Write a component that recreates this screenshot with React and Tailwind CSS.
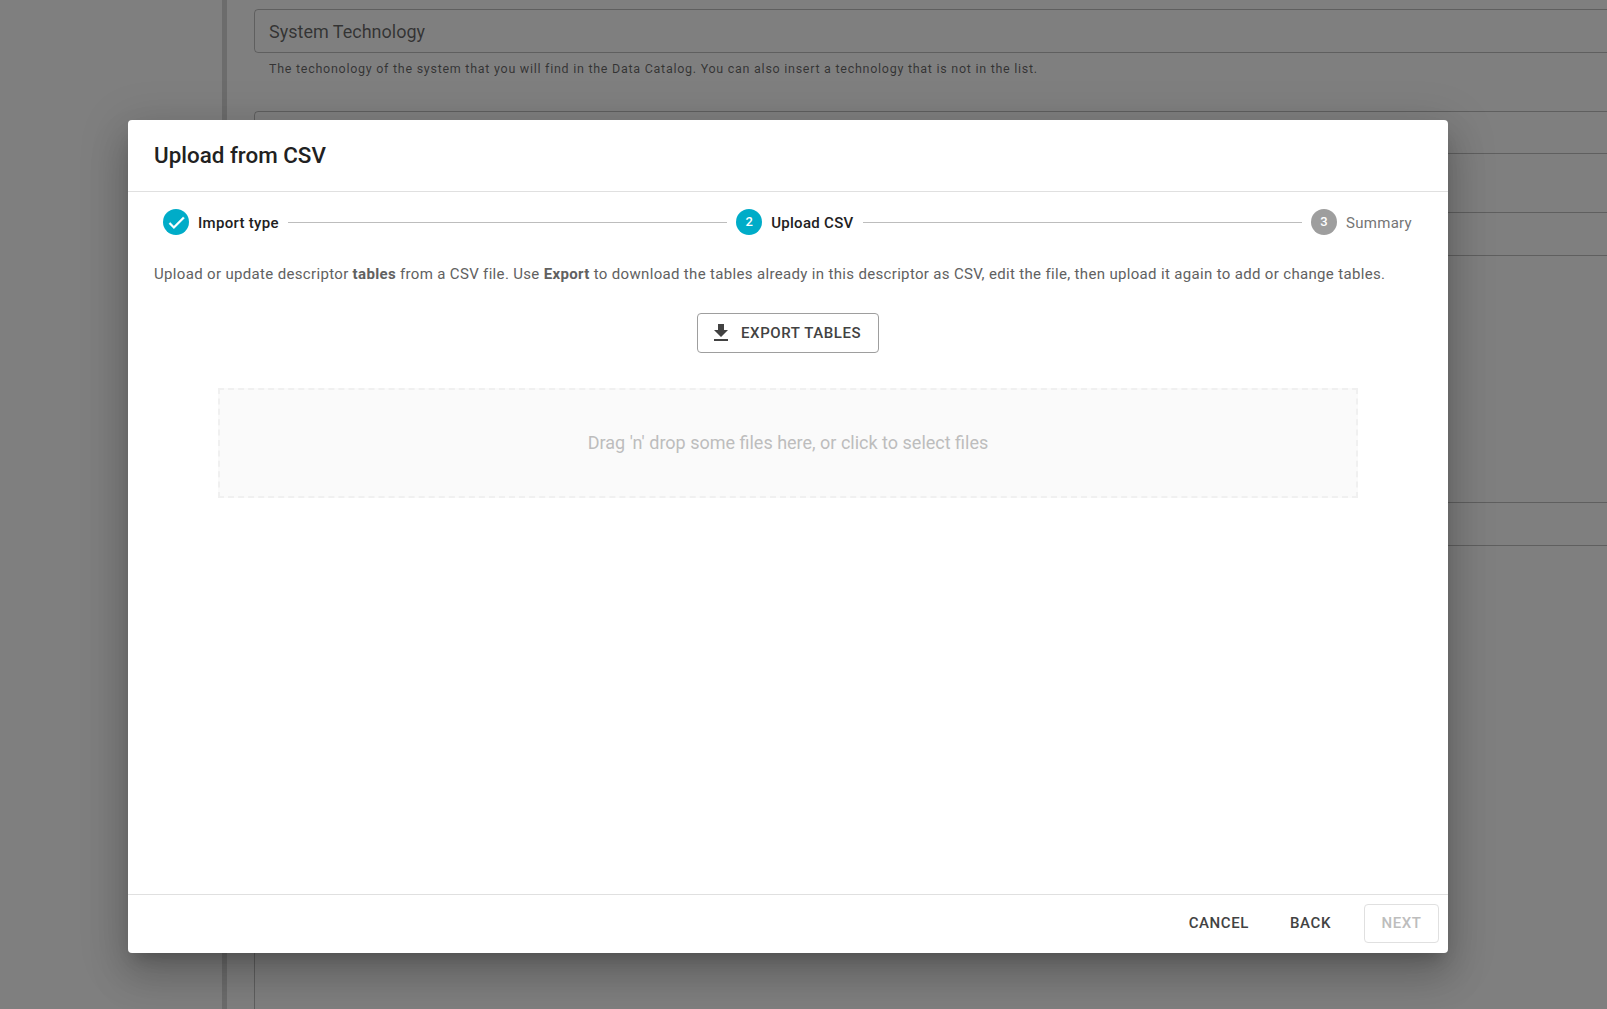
import React from 'react';

const Field = ({ label, className = '' }) => (
  <div className={`w-[1500px] shrink-0 border border-black/25 rounded-[4px] flex items-center pl-[14px] text-[18px] text-black/60 ${className}`}>
    {label}
  </div>
);

const Step = ({ state, number, label }) => (
  <div className="flex items-center gap-[9px] shrink-0">
    <div className={`w-[26px] h-[26px] rounded-full flex items-center justify-center text-white text-[13px] font-medium ${state === 'todo' ? 'bg-[#9e9e9e]' : 'bg-[#00acc8]'}`}>
      {state === 'done' ? (
        <svg viewBox="0 0 24 24" className="w-[21px] h-[21px] fill-white stroke-white stroke-[0.6]">
          <path d="M9 16.17L4.83 12l-1.42 1.41L9 19 21 7l-1.41-1.41z" />
        </svg>
      ) : (
        number
      )}
    </div>
    <span className={`pt-[2px] text-[15px] tracking-[0.3px] ${state === 'todo' ? 'text-[#757575]' : 'text-[#212121] font-medium'}`}>
      {label}
    </span>
  </div>
);

export default function App() {
  return (
    <div className="relative flex h-screen w-full overflow-hidden bg-white font-['Roboto',sans-serif]">
      {/* page behind the dialog */}
      <aside className="w-[222px] shrink-0" />
      <div className="w-[5px] shrink-0 bg-[#d8d8d8]" />
      <main className="flex flex-col pl-[27px] pt-[9px] min-w-0">
        <Field label="System Technology" className="h-[44px]" />
        <p className="mt-[8px] pl-[15px] text-[12.5px] tracking-[0.73px] text-black/60 leading-[16px]">
          The techonology of the system that you will find in the Data Catalog. You can also insert a technology that is not in the list.
        </p>
        <Field className="mt-[34px] h-[43px]" />
        <Field className="mt-[58px] h-[44px]" />
        <Field className="mt-[246px] h-[44px]" />
        <div className="w-[1500px] h-[300px] shrink-0 mt-[300px] border-l border-black/25" />
      </main>

      {/* overlay + dialog */}
      <div className="absolute inset-0 bg-black/50 pl-[128px] pt-[120px]">
        <div className="w-[1320px] h-[833px] flex flex-col bg-white rounded-[4px] shadow-[0_11px_15px_-7px_rgba(0,0,0,0.2),0_24px_38px_3px_rgba(0,0,0,0.14),0_9px_46px_8px_rgba(0,0,0,0.12)]">
          <header className="h-[72px] shrink-0 flex items-center px-[26px] border-b border-[#e0e0e0]">
            <h2 className="text-[22.4px] font-medium text-[#212121]">Upload from CSV</h2>
          </header>

          <div className="flex-1 flex flex-col px-[26px] min-h-0">
            <div className="flex items-center h-[60px] pl-[9px] pr-[10px] gap-[9px]">
              <Step state="done" label="Import type" />
              <div className="flex-1 h-px bg-[#bdbdbd]" />
              <Step state="active" number="2" label="Upload CSV" />
              <div className="flex-1 h-px bg-[#bdbdbd]" />
              <Step state="todo" number="3" label="Summary" />
            </div>

            <p className="mt-[12px] text-[15px] tracking-[0.335px] leading-[20px] text-[#616161]">
              Upload or update descriptor <b className="font-bold">tables</b> from a CSV file. Use <b className="font-bold">Export</b> to download the tables already in this descriptor as CSV, edit the file, then upload it again to add or change tables.
            </p>

            <div className="flex justify-center mt-[29px]">
              <button className="w-[182px] h-[40px] flex items-center gap-[8px] pl-[11px] border border-[#9e9e9e] rounded-[4px] text-[15px] font-medium tracking-[0.6px] text-[#424242]">
                <svg viewBox="0 0 24 24" className="w-[24px] h-[24px] fill-[#424242]">
                  <path d="M5,20H19V18H5M19,9H15V3H9V9H5L12,16L19,9Z" />
                </svg>
                EXPORT TABLES
              </button>
            </div>

            <div className="mt-[35px] mx-[64px] h-[110px] pb-[2px] flex items-center justify-center bg-[#fafafa] border-2 border-dashed border-[#f0f0f0] text-[18px] text-[#bdbdbd]">
              Drag 'n' drop some files here, or click to select files
            </div>
          </div>

          <footer className="h-[59px] shrink-0 flex items-center justify-end gap-[9px] pr-[9px] pb-[1px] border-t border-[#e0e0e0]">
            <button className="h-[39px] px-[16px] text-[15px] font-medium tracking-[0.6px] text-[#424242]">CANCEL</button>
            <button className="h-[39px] px-[16px] text-[15px] font-medium tracking-[0.6px] text-[#424242]">BACK</button>
            <button disabled className="ml-[8px] w-[75px] h-[39px] border border-[#e0e0e0] rounded-[4px] text-[15px] font-medium tracking-[0.6px] text-[#bdbdbd]">NEXT</button>
          </footer>
        </div>
      </div>
    </div>
  );
}
